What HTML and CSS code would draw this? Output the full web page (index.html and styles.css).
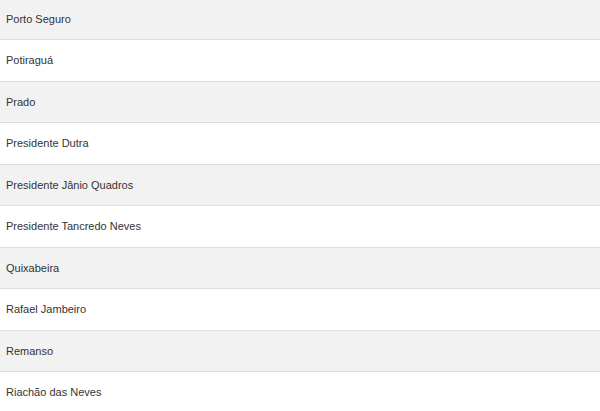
FILE: index.html
```html
<!DOCTYPE html>
<html lang="pt">
<head>
<meta charset="utf-8">
<link rel="stylesheet" href="styles.css">
</head>
<body>
<ul class="list">
  <li class="item">Porto Seguro</li>
  <li class="item">Potiraguá</li>
  <li class="item">Prado</li>
  <li class="item">Presidente Dutra</li>
  <li class="item">Presidente Jânio Quadros</li>
  <li class="item">Presidente Tancredo Neves</li>
  <li class="item">Quixabeira</li>
  <li class="item">Rafael Jambeiro</li>
  <li class="item">Remanso</li>
  <li class="item">Riachão das Neves</li>
</ul>
</body>
</html>
```
FILE: styles.css
```css
html, body {
  margin: 0;
  padding: 0;
  background: #fff;
}
.list {
  list-style: none;
  margin: -1.5px 0 0;
  padding: 0;
  font-family: "Liberation Sans", Arial, sans-serif;
  font-size: 11px;
  line-height: 16.5px;
  color: #333;
}
.item {
  padding: 12px 6px;
  border-bottom: 1px solid #ddd;
}
.item:nth-child(odd) {
  background: #f2f2f2;
}
```
